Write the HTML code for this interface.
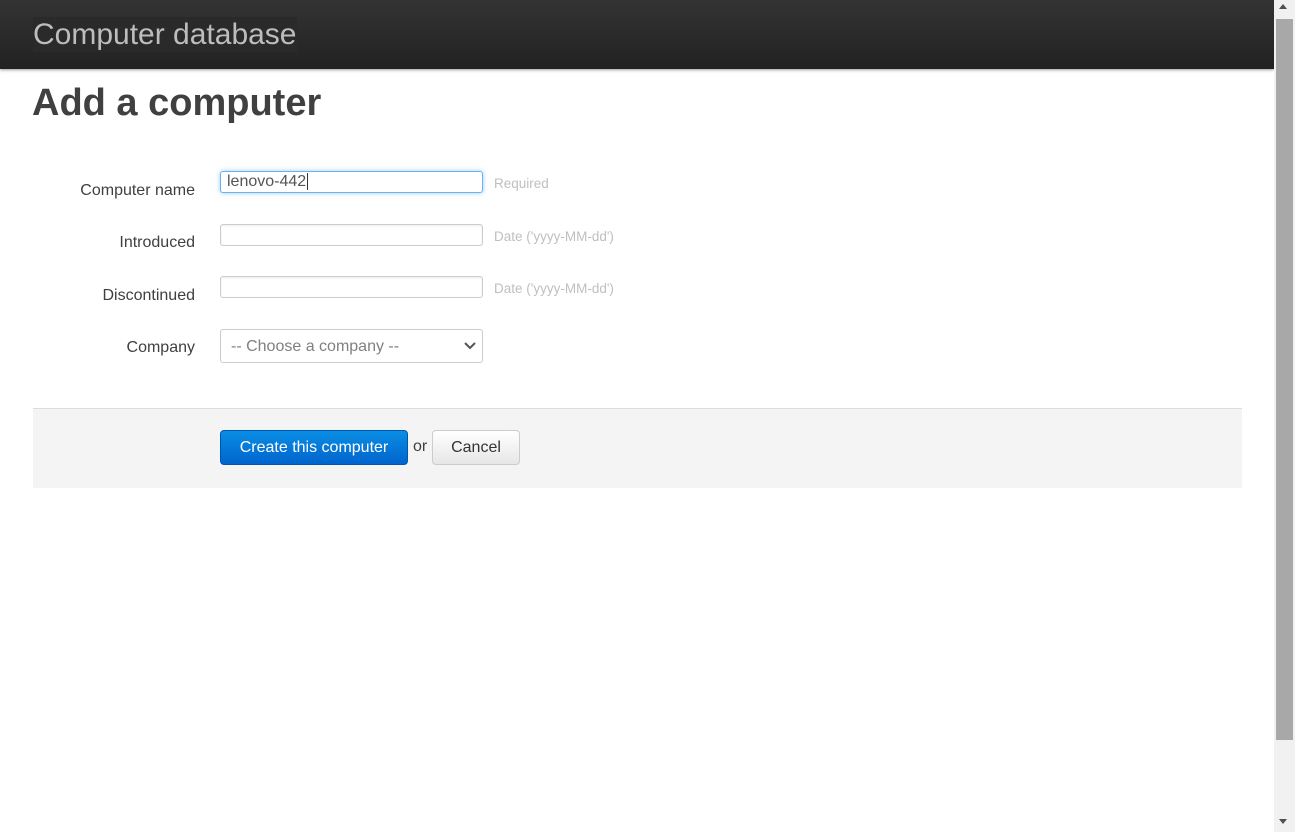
<!DOCTYPE html>
<html><head><meta charset="utf-8"><style>
*{box-sizing:border-box}
body{margin:0;width:1295px;height:832px;overflow:hidden;font-family:"Liberation Sans",Arial,sans-serif;background:#fff;position:relative}
.top{position:absolute;left:0;top:0;width:1274px;height:69px;background:linear-gradient(#333,#222);box-shadow:0 1px 3px rgba(0,0,0,.4)}
.top span{position:absolute;left:33px;top:17px;font-size:30px;color:#bdbdbd;background:#2a2a2a;line-height:35px}
h1{position:absolute;left:32px;top:83px;margin:0;font-size:38px;font-weight:bold;color:#404040;line-height:40px}
.lbl{position:absolute;right:1100px;font-size:16px;color:#404040}
.in{position:absolute;left:220px;width:263px;height:22px;border:1px solid #ccc;border-radius:3px;background:#fff;box-shadow:inset 0 1px 2px rgba(0,0,0,.08)}
.hint{position:absolute;left:494px;font-size:13.5px;color:#bfbfbf}
.sel{position:absolute;left:220px;top:329px;width:263px;height:34px;border:1px solid #ccc;border-radius:3px;font-size:16px;color:#808080;padding:8px 10px}
.actions{position:absolute;left:33px;top:408px;width:1209px;height:80px;background:#f4f4f4;border-top:1px solid #ddd}
.btn1{position:absolute;left:220px;top:430px;width:188px;height:35px;border-radius:4px;background:linear-gradient(#0a8ee4,#0064cd);border:1px solid #0055b0;color:#fff;font-size:16px;text-align:center;line-height:33px}
.or{position:absolute;left:413px;top:438px;font-size:16px;color:#404040}
.btn2{position:absolute;left:432px;top:430px;width:88px;height:35px;border-radius:4px;background:linear-gradient(#fff,#e6e6e6);border:1px solid #ccc;color:#333;font-size:16px;text-align:center;line-height:33px}
.sb{position:absolute;left:1274px;top:0;width:21px;height:832px;background:#f1f1f1}
.thumb{position:absolute;left:1276px;top:19px;width:17px;height:721px;background:#a8a8a8}
</style></head><body>
<div class="top"><span>Computer database</span></div>
<h1>Add a computer</h1>
<div class="lbl" style="top:182px">Computer name</div>
<div class="in" style="top:171px;border-color:#6fb0ef;box-shadow:0 0 5px rgba(82,168,236,.6);font-size:16px;color:#555;padding:0 6px;line-height:20px">lenovo-442<span style="border-left:1px solid #333;margin-left:1px"></span></div>
<div class="hint" style="top:176px">Required</div>
<div class="lbl" style="top:234px">Introduced</div>
<div class="in" style="top:224px"></div>
<div class="hint" style="top:229px">Date ('yyyy-MM-dd')</div>
<div class="lbl" style="top:287px">Discontinued</div>
<div class="in" style="top:276px"></div>
<div class="hint" style="top:281px">Date ('yyyy-MM-dd')</div>
<div class="lbl" style="top:339px">Company</div>
<div class="sel">-- Choose a company --<svg style="position:absolute;right:6px;top:12px" width="12" height="8" viewBox="0 0 12 8"><path d="M1 1l5 5 5-5" fill="none" stroke="#555" stroke-width="2"/></svg></div>
<div class="actions"></div>
<div class="btn1">Create this computer</div>
<div class="or">or</div>
<div class="btn2">Cancel</div>
<div class="sb"></div><div class="thumb"></div>
<div style="position:absolute;left:1279px;top:4px;width:0;height:0;border:4px solid transparent;border-bottom:5px solid #505050;border-top:0"></div>
<div style="position:absolute;left:1279px;top:819px;width:0;height:0;border:4px solid transparent;border-top:5px solid #505050;border-bottom:0"></div>
</body></html>
